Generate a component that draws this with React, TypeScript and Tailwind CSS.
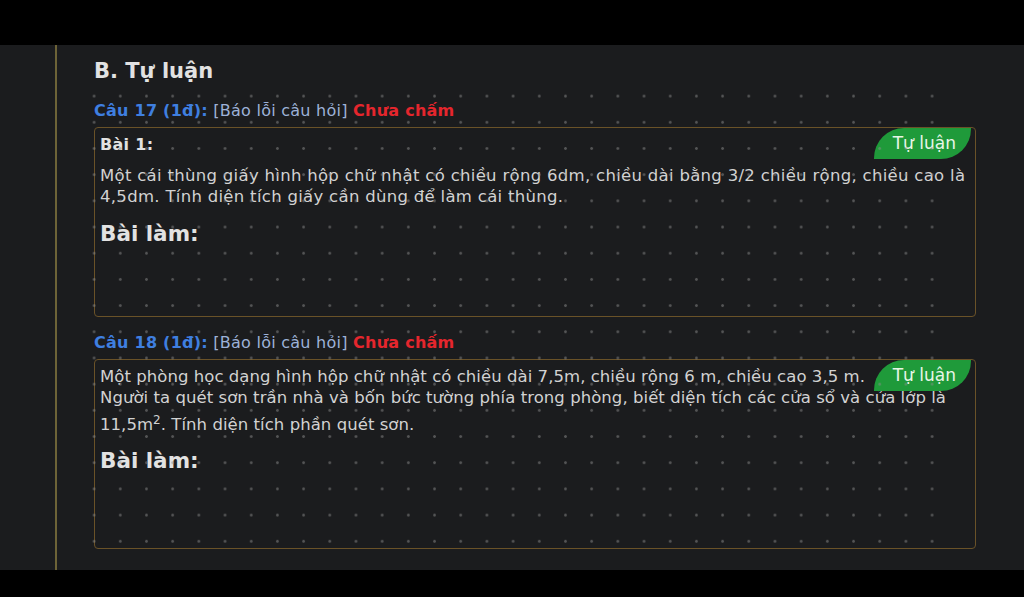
const Badge = () => (
  <div className="absolute top-0 right-[4px] h-[31px] w-[97px] rounded-tl-[30px] rounded-br-[30px] bg-[#1f9a3a] flex items-center justify-end pr-[15px] text-[17px] tracking-normal text-[#e8f6e8]">
    Tự luận
  </div>
);

const Caption = ({ num }: { num: number }) => (
  <div className="h-[24px] leading-[24px] text-[16px] tracking-[0.25px]">
    <span className="font-bold text-[#3f7fe0]">Câu {num} (1đ):</span>{' '}
    <span className="text-[#9db2d8]">[Báo lỗi câu hỏi]</span>{' '}
    <span className="font-bold text-[#e5262d]">Chưa chấm</span>
  </div>
);

export default function App() {
  return (
    <div className="w-[1024px] h-[597px] bg-black overflow-hidden font-['DejaVu_Sans','Noto_Sans',sans-serif]">
      <div className="mt-[45px] h-[525px] bg-[#1b1c1e] flex relative">
        <div className="w-[55px]" />
        <div className="w-[2px] bg-[#6d6337]" />
        <div className="pl-[37px] w-[919px]">
          <h2 className="pt-[10px] h-[42px] leading-[32px] text-[21px] font-semibold text-[#e2e2e2]">
            B. Tự luận
          </h2>

          <div className="mt-[12px]">
            <Caption num={17} />
          </div>
          <div className="relative mt-[4px] h-[190px] border border-[#6a5228] rounded-[4px] pt-[6px] pl-[5px] pr-[5px] text-[16.5px] leading-[21px] tracking-[0.3px] text-[#d2d2d2]">
            <Badge />
            <div className="font-bold text-[16px] text-[#e2e2e2]">Bài 1:</div>
            <p className="mt-[10px] whitespace-nowrap">
              Một cái thùng giấy hình hộp chữ nhật có chiều rộng 6dm, chiều dài bằng 3/2 chiều rộng, chiều cao là
              <br />
              4,5dm. Tính diện tích giấy cần dùng để làm cái thùng.
            </p>
            <div className="mt-[12px] text-[21.5px] leading-[30px] font-semibold tracking-normal text-[#e2e2e2]">Bài làm:</div>
          </div>

          <div className="mt-[14px]">
            <Caption num={18} />
          </div>
          <div className="relative mt-[4px] h-[190px] border border-[#6a5228] rounded-[4px] pt-[6px] pl-[5px] pr-[5px] text-[16.5px] leading-[21px] tracking-[0.05px] text-[#d2d2d2]">
            <Badge />
            <p className="whitespace-nowrap">
              Một phòng học dạng hình hộp chữ nhật có chiều dài 7,5m, chiều rộng 6 m, chiều cao 3,5 m.
              <br />
              Người ta quét sơn trần nhà và bốn bức tường phía trong phòng, biết diện tích các cửa sổ và cửa lớp là
              <span className="block pt-[6px]">
                11,5m<sup className="text-[12px] leading-none">2</sup>. Tính diện tích phần quét sơn.
              </span>
            </p>
            <div className="mt-[11px] text-[21.5px] leading-[30px] font-semibold tracking-normal text-[#e2e2e2]">Bài làm:</div>
          </div>
        </div>

        {/* dotted watermark over the content */}
        <div className="pointer-events-none absolute left-[81px] top-[38px] w-[865px] h-[472px] bg-[radial-gradient(circle,rgba(140,140,140,0.5)_1px,transparent_1.7px)] bg-[length:26.2px_26.2px]" />
      </div>
    </div>
  );
}
